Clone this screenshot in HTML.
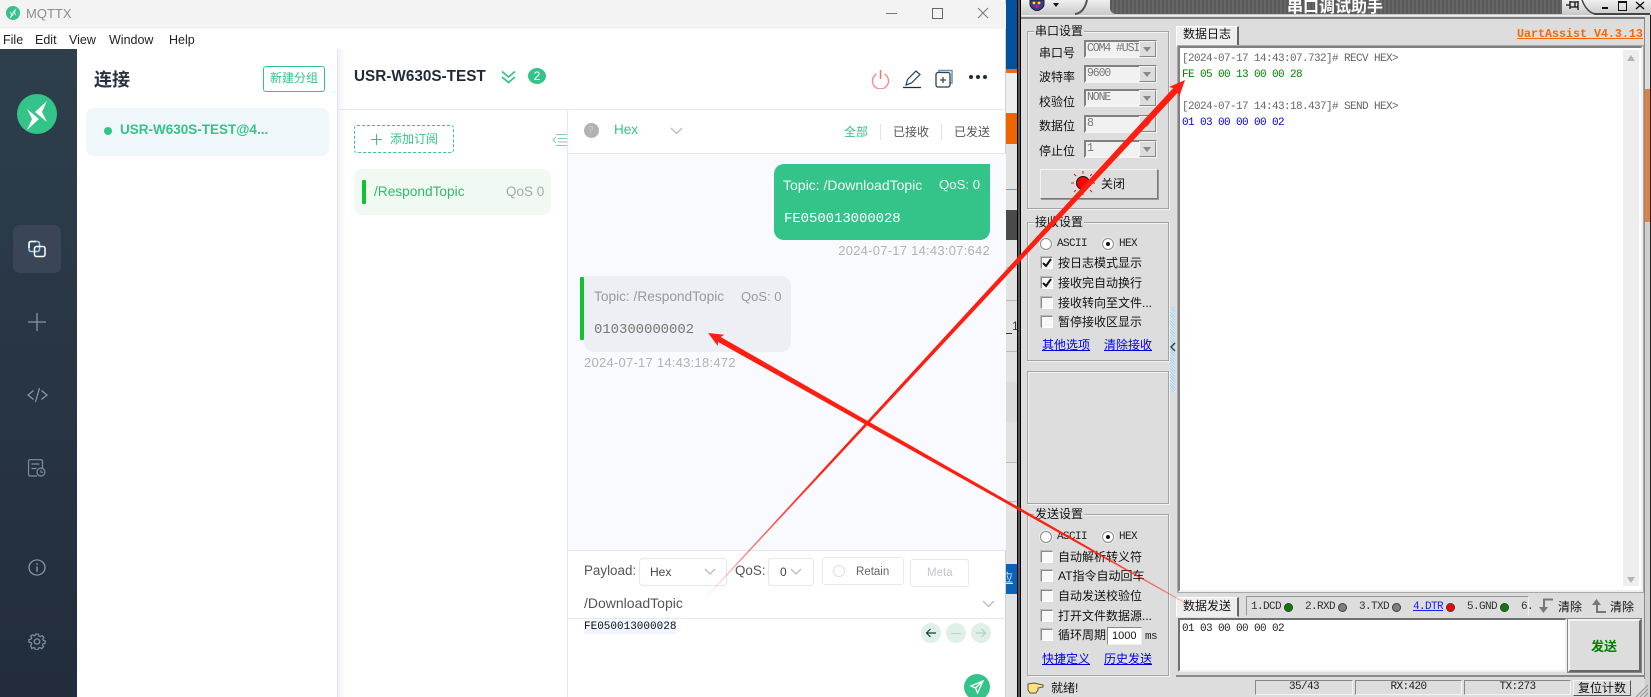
<!DOCTYPE html>
<html><head><meta charset="utf-8"><title>MQTTX</title>
<style>
html,body{margin:0;padding:0;width:1651px;height:697px;overflow:hidden;background:#ddd}
#p{position:relative;width:1651px;height:697px;overflow:hidden;font-family:"Liberation Sans","Noto Sans CJK SC",sans-serif}
#p div,#p svg{position:absolute}
.t{white-space:nowrap;line-height:20px;height:20px}
.g{color:#34c388}
.u{font-family:"Liberation Sans","WenQuanYi Zen Hei",sans-serif;font-size:12px;color:#111}
.m{font-family:"Liberation Mono","WenQuanYi Zen Hei",monospace}
.l{font-size:11px;letter-spacing:-.6px}
.box{border:1px solid #a4a4a4;box-shadow:1px 1px 0 #f2f2f2,inset 1px 1px 0 #f2f2f2;box-sizing:border-box}
.lab{background:#ddd;padding:0 1px;height:14px;line-height:14px;font-size:12px;color:#111;font-family:"WenQuanYi Zen Hei",sans-serif}
.cmb{left:1084px;width:73px;height:18px;box-sizing:border-box;background:#f1f1f1;border:2px solid;border-color:#808080 #f4f4f4 #f4f4f4 #808080;font:11.500px/14px "Liberation Mono",monospace;letter-spacing:-1.100px;color:#777;padding-left:1px;white-space:nowrap;overflow:hidden}
.dr{left:1139px;width:17px;height:16px;background:#ddd;border:1px solid;box-sizing:border-box;border-color:#f4f4f4 #888 #888 #f4f4f4}
.dr:after{content:"";position:absolute;left:3px;top:5px;border:4px solid transparent;border-top:5px solid #888}
.cb{left:1041px;width:12px;height:12px;box-sizing:border-box;background:#f8f8f8;border:1px solid;border-color:#8a8a8a #fff #fff #8a8a8a;box-shadow:-1px -1px 0 #bbb}
.rd{width:12px;height:12px;border-radius:50%;box-sizing:border-box;background:#fff;border:1px solid #888;box-shadow:0 0 0 1px #eee}
.lnk{color:#0000e6;text-decoration:underline;font-size:12px;font-family:"WenQuanYi Zen Hei",sans-serif}
.led{width:9px;height:9px;border-radius:50%;top:603px;box-shadow:0 0 0 1px #444 inset}
.sb{top:680px;height:15px;box-sizing:border-box;border:1px solid;border-color:#888 #f4f4f4 #f4f4f4 #888;text-align:center;font:11px/13px "Liberation Mono",monospace;letter-spacing:-.6px;color:#222}
</style></head><body><div id="p">

<!-- strip behind -->
<div style="left:1006px;top:0;width:11px;height:697px;background:#e2e2e2;overflow:hidden">
<div style="left:0;top:0;width:11px;height:69px;background:#03509e"></div>
<div style="left:0;top:69px;width:11px;height:4px;background:#ec6c10"></div>
<div style="left:0;top:73px;width:11px;height:40px;background:#eee"></div>
<div style="left:0;top:113px;width:11px;height:31px;background:#f06400"></div>
<div style="left:0;top:189px;width:11px;height:1px;background:#ee7a30"></div>
<div style="left:0;top:210px;width:11px;height:30px;background:#4a4a4a"></div>
<div style="left:0;top:267px;width:11px;height:1px;background:#bbb"></div>
<div style="left:0;top:300px;width:11px;height:1px;background:#bbb"></div>
<div style="left:0;top:333px;width:6px;height:1px;background:#333"></div>
<div class="t" style="left:6px;top:316px;font-size:12px;color:#333">1</div>
<div style="left:0;top:351px;width:11px;height:1px;background:#bbb"></div>
<div style="left:0;top:382px;width:11px;height:40px;background:#dadada"></div>
<div style="left:0;top:462px;width:11px;height:38px;background:#e8e8e8;border-bottom:1px solid #bbb;border-top:1px solid #bbb"></div>
<div style="left:0;top:564px;width:11px;height:30px;background:#0a63b8"></div>
<div class="t" style="left:-5px;top:568px;font-size:12px;color:#cfe4ff;text-decoration:underline">应</div>
</div>
<div style="left:1017px;top:0;width:4px;height:697px;background:#000;border-left:0"></div>
<div style="left:1018px;top:0;width:2px;height:697px;background:#555"></div>

<!-- MQTTX window -->
<div style="left:0;top:0;width:1006px;height:697px;background:#fff;border-right:1px solid #cfcfcf;box-sizing:border-box"></div>
<div style="left:0;top:0;width:1006px;height:29px;background:#f3f3f3;border-top-right-radius:6px"></div>
<svg style="left:6px;top:6px" width="14" height="14" viewBox="0 0 40 40"><circle cx="20" cy="20" r="20" fill="#34c388"/><path d="M30 7 18 18l12 10-5-10zM10 15l12 10-12 11 5-11z" fill="#fff"/></svg>
<div class="t" style="left:26px;top:4px;font-size:13px;color:#8c8c8c">MQTTX</div>
<div style="left:886px;top:13px;width:11px;height:1px;background:#777"></div>
<div style="left:932px;top:8px;width:9px;height:9px;border:1px solid #666"></div>
<svg style="left:977px;top:7px" width="12" height="12" viewBox="0 0 12 12"><path d="M1 1 11 11M11 1 1 11" stroke="#777" fill="none"/></svg>
<div class="t" style="left:3px;top:30px;font-size:12.500px;color:#222">File</div>
<div class="t" style="left:35px;top:30px;font-size:12.500px;color:#222">Edit</div>
<div class="t" style="left:69px;top:30px;font-size:12.500px;color:#222">View</div>
<div class="t" style="left:109px;top:30px;font-size:12.500px;color:#222">Window</div>
<div class="t" style="left:169px;top:30px;font-size:12.500px;color:#222">Help</div>

<!-- sidebar -->
<div style="left:0;top:49px;width:77px;height:648px;background:linear-gradient(180deg,#2e3f4c,#222c3c)"></div>
<svg style="left:17px;top:94px" width="40" height="40" viewBox="0 0 40 40"><circle cx="20" cy="20" r="20" fill="#34c388"/><path d="M30 7 18 18l12 10-5-10zM10 15l12 10-12 11 5-11z" fill="#fff"/></svg>
<div style="left:13px;top:225px;width:48px;height:48px;border-radius:7px;background:#3a4657"></div>
<svg style="left:27px;top:240px" width="20" height="18" viewBox="0 0 20 18"><rect x="2" y="1.500" width="10.500" height="10" rx="2" fill="none" stroke="#8fd6ff" stroke-width="1.500"/><rect x="7.500" y="6.500" width="10.500" height="10" rx="2" fill="none" stroke="#fff" stroke-width="1.500"/><path d="M2 8V3.500a2 2 0 0 1 2-2H9" fill="none" stroke="#fff" stroke-width="1.500"/></svg>
<svg style="left:28px;top:313px" width="18" height="18" viewBox="0 0 18 18"><path d="M9 0V18M0 9H18" stroke="#8b96a0" stroke-width="1.300"/></svg>
<svg style="left:27px;top:387px" width="21" height="16" viewBox="0 0 21 16"><path d="M6.500 3.500 1 8l5.500 4.500M14.500 3.500 20 8l-5.500 4.500M12.500 1 8.500 15" stroke="#8b9aa6" stroke-width="1.200" fill="none"/></svg>
<svg style="left:28px;top:459px" width="18" height="18" viewBox="0 0 18 18"><path d="M9 17H2a1.500 1.500 0 0 1-1.500-1.500V2A1.500 1.500 0 0 1 2 .7h11A1.500 1.500 0 0 1 14.500 2v7" stroke="#7f909e" stroke-width="1.200" fill="none"/><path d="M3.500 5h8M3.500 9.500h5" stroke="#7f909e" stroke-width="1.200"/><circle cx="13" cy="13" r="4" fill="none" stroke="#7f909e" stroke-width="1.200"/><path d="M13 10.800v2.400h2.200" stroke="#7f909e" fill="none"/></svg>
<svg style="left:28px;top:559px" width="18" height="17" viewBox="0 0 18 18" preserveAspectRatio="none"><circle cx="9" cy="9" r="8" stroke="#8a99a5" stroke-width="1.300" fill="none"/><path d="M9 8v5.500M9 4.500v1.700" stroke="#8a99a5" stroke-width="1.400"/></svg>
<svg style="left:28px;top:633px" width="18" height="17" viewBox="0 0 18 18" preserveAspectRatio="none"><path d="M7.500 1h3l.5 2.300 1.600.7 2-1.200 2 2.100-1.200 2 .6 1.500 2 .6v3l-2.300.5-.6 1.500 1.200 2-2.100 2.100-2-1.200-1.500.6-.5 2.300h-3l-.5-2.300-1.500-.6-2 1.200L1.900 14.500l1.200-2-.7-1.500L0 10.500v-3l2.400-.5.700-1.500-1.200-2L4 1.900l2 1.200 1-.6z" transform="translate(.9 .2) scale(.9)" fill="none" stroke="#7f909e" stroke-width="1.400"/><circle cx="9" cy="9" r="2.800" fill="none" stroke="#7f909e" stroke-width="1.300"/></svg>

<!-- connection list -->
<div class="t" style="left:94px;top:69px;font-size:18px;font-weight:700;color:#2a3440;font-family:'Noto Sans CJK SC',sans-serif">连接</div>
<div style="left:263px;top:66px;width:62px;height:26px;box-sizing:border-box;border:1px solid #34c388;border-radius:3px"></div>
<div class="t g" style="left:270px;top:68px;font-size:12px">新建分组</div>
<div style="left:86px;top:108px;width:243px;height:48px;background:#eff7fb;border-radius:8px"></div>
<div style="left:104px;top:127px;width:8px;height:8px;border-radius:50%;background:#34c388"></div>
<div class="t g" style="left:120px;top:120px;font-size:13.500px;font-weight:700">USR-W630S-TEST@4...</div>
<div style="left:337px;top:49px;width:1px;height:648px;background:#e3e3ea"></div>
<div style="left:338px;top:49px;width:8px;height:648px;background:linear-gradient(90deg,#f1f2f8,#fff)"></div>

<!-- header -->
<div class="t" style="left:354px;top:67px;font-size:15.300px;font-weight:700;color:#1f2a3a">USR-W630S-TEST</div>
<svg style="left:501px;top:70px" width="15" height="14" viewBox="0 0 15 14"><path d="M1 1.500 7.500 7 14 1.500M1 7 7.500 12.500 14 7" stroke="#34c388" stroke-width="1.800" fill="none"/></svg>
<div style="left:528px;top:68px;width:18px;height:16px;border-radius:50%;background:#34c388;color:#fff;font-size:12px;line-height:17px;text-align:center">2</div>
<svg style="left:871px;top:69px" width="19" height="20" viewBox="0 0 19 20"><path d="M5.500 5a8 8 0 1 0 8 0" fill="none" stroke="#f88" stroke-width="1.400"/><path d="M9.500 1v9" stroke="#f66" stroke-width="1.400"/></svg>
<svg style="left:902px;top:69px" width="20" height="20" viewBox="0 0 20 20"><path d="M4 16l1.500-5.500L14 2l4 3.500L9.500 14z" fill="none" stroke="#23405f" stroke-width="1.200"/><path d="M1 18.500H19" stroke="#1f2a3a" stroke-width="1.200"/></svg>
<svg style="left:935px;top:69px" width="19" height="19" viewBox="0 0 19 19"><path d="M4 3V1.500h13V14h-1.500" fill="none" stroke="#7b8b9c" stroke-width="1.500"/><rect x="1" y="3.500" width="14" height="14.500" rx="2" fill="#fff" stroke="#23405f" stroke-width="1.300"/><path d="M8 8v6M5 11h6" stroke="#444" stroke-width="1.300"/></svg>
<div style="left:969px;top:75px;width:4px;height:4px;background:#1f2a3a;border-radius:50%"></div>
<div style="left:976px;top:75px;width:4px;height:4px;background:#1f2a3a;border-radius:50%"></div>
<div style="left:983px;top:75px;width:4px;height:4px;background:#1f2a3a;border-radius:50%"></div>
<div style="left:338px;top:109px;width:668px;height:1px;background:#e6e6f0"></div>

<!-- subs -->
<div style="left:354px;top:125px;width:100px;height:28px;box-sizing:border-box;border:1px dashed #34c388;border-radius:3px"></div>
<svg style="left:371px;top:134px" width="11" height="11" viewBox="0 0 11 11"><path d="M5.500 0V11M0 5.500H11" stroke="#34c388"/></svg>
<div class="t g" style="left:390px;top:129px;font-size:12px">添加订阅</div>
<svg style="left:552px;top:133px" width="15" height="14" viewBox="0 0 15 14"><path d="M4 1.500H15M6 5.500H15M6 9H15M4 12.500H15M4 4 1 7l3 3" stroke="#7ed0ab" fill="none"/></svg>
<div style="left:354px;top:169px;width:197px;height:46px;background:#f0faf3;border-radius:8px"></div>
<div style="left:362px;top:180px;width:4px;height:24px;background:#10c22e;border-radius:1px"></div>
<div class="t" style="left:374px;top:182px;font-size:13.700px;color:#34b86a">/RespondTopic</div>
<div class="t" style="left:506px;top:182px;font-size:13.500px;color:#a8a8a8">QoS 0</div>

<!-- message pane -->
<div style="left:567px;top:109px;width:1px;height:588px;background:#e6e6f0"></div>
<div style="left:568px;top:153px;width:438px;height:398px;background:#f9faff;border-top:1px solid #e6e6f0;border-bottom:1px solid #e6e6f0;box-sizing:border-box"></div>
<div style="left:583.500px;top:123px;width:15px;height:15px;border-radius:50%;background:#b2b2b2"></div>
<div class="t" style="left:588px;top:121px;font-size:10px;color:#ccc">?</div>
<div class="t g" style="left:614px;top:120px;font-size:13.500px">Hex</div>
<svg style="left:670px;top:127px" width="13" height="8" viewBox="0 0 13 8"><path d="M1 1l5.500 5.500L12 1" fill="none" stroke="#b5bcc4" stroke-width="1.300"/></svg>
<div class="t g" style="left:844px;top:122px;font-size:12px">全部</div>
<div style="left:880px;top:124px;width:1px;height:16px;background:#e3e3e8"></div>
<div class="t" style="left:893px;top:122px;font-size:12px;color:#555">已接收</div>
<div style="left:941px;top:124px;width:1px;height:16px;background:#e3e3e8"></div>
<div class="t" style="left:954px;top:122px;font-size:12px;color:#555">已发送</div>

<div style="left:774px;top:164px;width:216px;height:76px;background:#34c388;border-radius:10px 0 10px 10px"></div>
<div class="t" style="left:783px;top:175px;font-size:14px;color:#eefaf4">Topic: /DownloadTopic</div>
<div class="t" style="left:939px;top:175px;font-size:13.200px;color:#eefaf4">QoS: 0</div>
<div class="t m" style="left:784px;top:209px;font-size:14px;color:#fff;letter-spacing:-.07px">FE050013000028</div>
<div class="t" style="right:661px;top:241px;font-size:13px;color:#b3b3b3;letter-spacing:.25px">2024-07-17 14:43:07:642</div>

<div style="left:584px;top:276px;width:207px;height:76px;background:#eeeff4;border-radius:0 10px 10px 10px"></div>
<div style="left:580px;top:277px;width:4px;height:63px;background:#10c22e;border-radius:1px"></div>
<div class="t" style="left:594px;top:287px;font-size:13.700px;color:#9a9a9a">Topic: /RespondTopic</div>
<div class="t" style="left:741px;top:287px;font-size:13px;color:#9a9a9a">QoS: 0</div>
<div class="t m" style="left:594px;top:320px;font-size:14px;color:#777;letter-spacing:-.07px">010300000002</div>
<div class="t" style="left:584px;top:353px;font-size:13px;color:#b3b3b3;letter-spacing:.25px">2024-07-17 14:43:18:472</div>

<!-- publish -->
<div class="t" style="left:584px;top:561px;font-size:13.400px;color:#555">Payload:</div>
<div style="left:639px;top:558px;width:88px;height:28px;box-sizing:border-box;border:1px solid #e5e6ee;border-radius:4px"></div>
<div class="t" style="left:650px;top:562px;font-size:12px;color:#444">Hex</div>
<svg style="left:704px;top:568px" width="12" height="8" viewBox="0 0 12 8"><path d="M1 1l5 5 5-5" fill="none" stroke="#b5bcc4" stroke-width="1.300"/></svg>
<div class="t" style="left:735px;top:561px;font-size:13.400px;color:#555">QoS:</div>
<div style="left:768px;top:558px;width:46px;height:28px;box-sizing:border-box;border:1px solid #e5e6ee;border-radius:4px"></div>
<div class="t" style="left:780px;top:562px;font-size:12px;color:#444">0</div>
<svg style="left:790px;top:568px" width="12" height="8" viewBox="0 0 12 8"><path d="M1 1l5 5 5-5" fill="none" stroke="#b5bcc4" stroke-width="1.300"/></svg>
<div style="left:822px;top:557px;width:82px;height:28px;box-sizing:border-box;border:1px solid #e8e9f0;border-radius:3px"></div>
<div style="left:833px;top:565px;width:12px;height:12px;box-sizing:border-box;border:1px solid #dcdfe6;border-radius:50%"></div>
<div class="t" style="left:856px;top:562px;font-size:11.500px;color:#666">Retain</div>
<div style="left:910px;top:559px;width:59px;height:28px;box-sizing:border-box;border:1px solid #e8e9f0;border-radius:3px"></div>
<div class="t" style="left:927px;top:563px;font-size:11.500px;color:#c2c6cf">Meta</div>
<div class="t" style="left:584px;top:593px;font-size:14px;color:#555">/DownloadTopic</div>
<svg style="left:982px;top:600px" width="13" height="8" viewBox="0 0 13 8"><path d="M1 1l5.500 5.500L12 1" fill="none" stroke="#b5bcc4" stroke-width="1.300"/></svg>
<div style="left:568px;top:618px;width:438px;height:1px;background:#e6e6f0"></div>
<div style="left:584px;top:620px;width:92px;height:14px;background:#f0f5ff"></div>
<div class="t m" style="left:584px;top:617px;font-size:11px;color:#111">FE050013000028</div>
<div style="left:921px;top:623px;width:20px;height:20px;border-radius:50%;background:#dff0e8"></div>
<div style="left:946px;top:623px;width:20px;height:20px;border-radius:50%;background:#dff0e8"></div>
<div style="left:971px;top:623px;width:20px;height:20px;border-radius:50%;background:#dff0e8"></div>
<svg style="left:925px;top:627px" width="12" height="12" viewBox="0 0 12 12"><path d="M11 6H1.500M5.500 2 1.500 6l4 4" fill="none" stroke="#1f3a4a" stroke-width="1.200"/></svg>
<div style="left:951px;top:633px;width:10px;height:1px;background:#bcd8cc"></div>
<svg style="left:975px;top:627px" width="12" height="12" viewBox="0 0 12 12"><path d="M1 6h9.500M6.500 2l4 4-4 4" fill="none" stroke="#b4cfc3" stroke-width="1.200"/></svg>
<div style="left:964px;top:674px;width:26px;height:26px;border-radius:50%;background:#34c388"></div>
<svg style="left:970px;top:680px" width="14" height="14" viewBox="0 0 14 14"><path d="M13 1 1 6l4.500 2L7.500 13zM13 1 5.500 8" fill="none" stroke="#fff" stroke-width="1.300"/></svg>

<!-- Uart window -->
<div style="left:1021px;top:0;width:630px;height:697px;background:#ddd"></div>
<div style="left:1650px;top:0;width:1px;height:697px;background:#222"></div>
<div style="left:1645px;top:89px;width:5px;height:133px;background:#e07f40"></div>
<div style="left:1645px;top:222px;width:5px;height:475px;background:#cfcfcf"></div>
<div style="left:1644px;top:19px;width:1px;height:660px;background:#8a8a8a"></div>
<!-- title bar -->
<div style="left:1021px;top:0;width:630px;height:15px;background:linear-gradient(180deg,#f0f0f0,#c8c8c8)"></div>
<div style="left:1110px;top:0;width:452px;height:14px;background:repeating-linear-gradient(90deg,#5a5a5a 0 2px,#666 2px 4px);border-radius:0 0 0 6px"></div>
<svg style="left:1075px;top:0" width="14" height="16" viewBox="0 0 14 16"><path d="M12 0Q9 13 0 14" fill="none" stroke="#555" stroke-width="2"/></svg>
<svg style="left:1580px;top:0" width="16" height="16" viewBox="0 0 16 16"><path d="M2 0Q7 13 16 14" fill="none" stroke="#444" stroke-width="1.500"/></svg>
<div style="left:1594px;top:13px;width:56px;height:2px;background:#444"></div>
<div class="t" style="left:1287px;top:-5px;font-size:16px;font-weight:700;color:#fff;letter-spacing:0;font-family:'Noto Sans CJK SC',sans-serif">串口调试助手</div>
<svg style="left:1029px;top:0" width="16" height="11" viewBox="0 0 16 11"><path d="M1 0H15V5Q14 9 8 11 2 9 1 5z" fill="#3a3a9a" stroke="#222"/><circle cx="5" cy="3" r="1.400" fill="#ffe000"/><circle cx="10" cy="3" r="1.400" fill="#ffe000"/><circle cx="8" cy="6.500" r="1.500" fill="#e22"/></svg>
<div style="left:1053px;top:3px;width:0;height:0;border:3.500px solid transparent;border-top:4px solid #111"></div>
<svg style="left:1566px;top:0" width="13" height="11" viewBox="0 0 13 11"><path d="M0 5H4M4 1V9M4 2H12V7H4M9 2V7M12 1V10" stroke="#111" fill="none" stroke-width="1.300"/></svg>
<div style="left:1602px;top:7px;width:6px;height:2px;background:#111"></div>
<div style="left:1618px;top:1px;width:7px;height:7px;border:1.500px solid #111;border-top-width:2px"></div>
<svg style="left:1635px;top:1px" width="10" height="9" viewBox="0 0 10 9"><path d="M1 1l8 7M9 1 1 8" stroke="#111" stroke-width="1.400"/></svg>
<div style="left:1021px;top:15px;width:624px;height:1px;background:#eee"></div>
<div style="left:1021px;top:17px;width:624px;height:2px;background:#7e7e7e"></div>

<!-- serial settings -->
<div class="box" style="left:1027px;top:31px;width:142px;height:178px"></div>
<div class="lab" style="left:1034px;top:24px">串口设置</div>
<div class="t u" style="left:1039px;top:43px">串口号</div>
<div class="t u" style="left:1039px;top:67px">波特率</div>
<div class="t u" style="left:1039px;top:92px">校验位</div>
<div class="t u" style="left:1039px;top:116px">数据位</div>
<div class="t u" style="left:1039px;top:141px">停止位</div>
<div class="cmb" style="top:40px">COM4 #USI</div><div class="dr" style="top:41px"></div>
<div class="cmb" style="top:65px">9600</div><div class="dr" style="top:66px"></div>
<div class="cmb" style="top:89px">NONE</div><div class="dr" style="top:90px"></div>
<div class="cmb" style="top:115px">8</div><div class="dr" style="top:116px"></div>
<div class="cmb" style="top:140px">1</div><div class="dr" style="top:141px"></div>
<div style="left:1040px;top:169px;width:118px;height:30px;box-sizing:border-box;background:#ddd;border:1px solid;border-color:#f4f4f4 #777 #777 #f4f4f4;box-shadow:1px 1px 0 #999"></div>
<svg style="left:1071px;top:171px" width="24" height="24" viewBox="0 0 24 24"><g stroke="#f11" stroke-width="1"><path d="M12 0v3M12 21v3M0 12h3M21 12h3M3 3l2 2M19 19l2 2M21 3l-2 2M3 21l2-2"/></g><circle cx="12" cy="12" r="6.500" fill="#f00" stroke="#111"/></svg>
<div class="t u" style="left:1101px;top:174px">关闭</div>

<!-- rx settings -->
<div class="box" style="left:1027px;top:222px;width:142px;height:139px"></div>
<div class="lab" style="left:1034px;top:215px">接收设置</div>
<div class="rd" style="left:1040px;top:238px"></div>
<div class="t m l" style="left:1057px;top:234px;color:#222">ASCII</div>
<div class="rd" style="left:1102px;top:238px"></div><div style="left:1106px;top:242px;width:4px;height:4px;border-radius:50%;background:#111"></div>
<div class="t m l" style="left:1119px;top:234px;color:#222">HEX</div>
<div class="cb" style="top:257px"></div><svg style="left:1042px;top:258px" width="10" height="10" viewBox="0 0 10 10"><path d="M1 5l3 3 5-7" fill="none" stroke="#111" stroke-width="2"/></svg>
<div class="cb" style="top:277px"></div><svg style="left:1042px;top:278px" width="10" height="10" viewBox="0 0 10 10"><path d="M1 5l3 3 5-7" fill="none" stroke="#111" stroke-width="2"/></svg>
<div class="cb" style="top:297px"></div>
<div class="cb" style="top:316px"></div>
<div class="t u" style="left:1058px;top:253px">按日志模式显示</div>
<div class="t u" style="left:1058px;top:273px">接收完自动换行</div>
<div class="t u" style="left:1058px;top:293px">接收转向至文件...</div>
<div class="t u" style="left:1058px;top:312px">暂停接收区显示</div>
<div class="t lnk" style="left:1042px;top:335px">其他选项</div>
<div class="t lnk" style="left:1104px;top:335px">清除接收</div>

<!-- splitter -->
<div style="left:1170px;top:307px;width:5px;height:85px;background:repeating-linear-gradient(45deg,#a9cfe6 0 1px,#dcecf5 1px 2px)"></div>
<svg style="left:1170px;top:342px" width="6" height="10" viewBox="0 0 6 10"><path d="M5 1 1 5l4 4" fill="none" stroke="#245" stroke-width="1.500"/></svg>

<div class="box" style="left:1027px;top:371px;width:142px;height:133px"></div>

<!-- tx settings -->
<div class="box" style="left:1027px;top:514px;width:142px;height:162px"></div>
<div class="lab" style="left:1034px;top:507px">发送设置</div>
<div class="rd" style="left:1040px;top:531px"></div>
<div class="t m l" style="left:1057px;top:527px;color:#222">ASCII</div>
<div class="rd" style="left:1102px;top:531px"></div><div style="left:1106px;top:535px;width:4px;height:4px;border-radius:50%;background:#111"></div>
<div class="t m l" style="left:1119px;top:527px;color:#222">HEX</div>
<div class="cb" style="top:551px"></div><div class="cb" style="top:570px"></div><div class="cb" style="top:590px"></div><div class="cb" style="top:610px"></div><div class="cb" style="top:629px"></div>
<div class="t u" style="left:1058px;top:547px">自动解析转义符</div>
<div class="t u" style="left:1058px;top:566px">AT指令自动回车</div>
<div class="t u" style="left:1058px;top:586px">自动发送校验位</div>
<div class="t u" style="left:1058px;top:606px">打开文件数据源...</div>
<div class="t u" style="left:1058px;top:625px">循环周期</div>
<div style="left:1107px;top:627px;width:35px;height:18px;box-sizing:border-box;background:#fff;border:1px solid;border-color:#888 #eee #eee #888;font:11px/16px 'Liberation Sans',sans-serif;padding-left:4px;color:#111">1000</div>
<div class="t m l" style="left:1145px;top:627px;color:#222">ms</div>
<div class="t lnk" style="left:1042px;top:649px">快捷定义</div>
<div class="t lnk" style="left:1104px;top:649px">历史发送</div>

<!-- status left -->
<svg style="left:1027px;top:681px" width="17" height="14" viewBox="0 0 17 14"><path d="M1 3 7 2l9 2v2l-5 1v2L9 12H3L1 9z" fill="#ffe27a" stroke="#554" stroke-width="1"/></svg>
<div class="t u" style="left:1051px;top:678px">就绪!</div>

<!-- log tab -->
<div style="left:1176px;top:26px;width:63px;height:21px;box-sizing:border-box;background:#eee;border:1px solid;border-color:#fff #666 transparent #fff;border-right-width:2px"></div>
<div class="t u" style="left:1183px;top:24px">数据日志</div>
<div class="t m" style="left:1517px;top:24px;font-size:11.670px;font-weight:700;color:#ff6600;text-decoration:underline">UartAssist V4.3.13</div>
<!-- log box -->
<div style="left:1178px;top:46px;width:465px;height:546px;box-sizing:border-box;background:#fff;border:2px solid;border-color:#808080 #f0f0f0 #f0f0f0 #808080;box-shadow:0 0 0 1px #aaa"></div>
<div style="left:1623px;top:50px;width:16px;height:536px;background:#eee"></div>
<div style="left:1627px;top:55px;width:0;height:0;border:4px solid transparent;border-bottom:6px solid #b4b4b4;border-top:0"></div>
<div style="left:1627px;top:577px;width:0;height:0;border:4px solid transparent;border-top:6px solid #b4b4b4;border-bottom:0"></div>
<div class="t m l" style="left:1182px;top:49px;color:#666">[2024-07-17 14:43:07.732]# RECV HEX&gt;</div>
<div class="t m l" style="left:1182px;top:65px;color:#008000">FE 05 00 13 00 00 28</div>
<div class="t m l" style="left:1182px;top:97px;color:#666">[2024-07-17 14:43:18.437]# SEND HEX&gt;</div>
<div class="t m l" style="left:1182px;top:113px;color:#0000e6">01 03 00 00 00 02</div>

<!-- send tab row -->
<div style="left:1176px;top:597px;width:63px;height:20px;box-sizing:border-box;background:#eee;border:1px solid;border-color:#fff #666 transparent #fff;border-right-width:2px"></div>
<div class="t u" style="left:1183px;top:596px">数据发送</div>
<div style="left:1246px;top:596px;width:283px;height:20px;box-sizing:border-box;border:1px solid;border-color:#999 #f2f2f2 transparent #999"></div>
<div class="t m l" style="left:1251px;top:597px;color:#333">1.DCD</div><div class="led" style="left:1284px;background:#0a7a0a"></div>
<div class="t m l" style="left:1305px;top:597px;color:#333">2.RXD</div><div class="led" style="left:1338px;background:#808080"></div>
<div class="t m l" style="left:1359px;top:597px;color:#333">3.TXD</div><div class="led" style="left:1392px;background:#808080"></div>
<div class="t m l" style="left:1413px;top:597px;color:#1a1aff;text-decoration:underline">4.DTR</div><div class="led" style="left:1446px;background:#f00"></div>
<div class="t m l" style="left:1467px;top:597px;color:#333">5.GND</div><div class="led" style="left:1500px;background:#0a7a0a"></div>
<div class="t m l" style="left:1521px;top:597px;color:#333">6.</div>
<svg style="left:1538px;top:598px" width="16" height="16" viewBox="0 0 16 16"><path d="M15 1.500H6V11" fill="none" stroke="#777" stroke-width="2"/><path d="M1 9H10L5.500 15z" fill="#777"/></svg>
<div class="t u" style="left:1558px;top:597px">清除</div>
<svg style="left:1591px;top:598px" width="16" height="16" viewBox="0 0 16 16"><path d="M15 14H6V6" fill="none" stroke="#777" stroke-width="2"/><path d="M1 7H10L5.500 1z" fill="#777"/></svg>
<div class="t u" style="left:1610px;top:597px">清除</div>

<!-- send box -->
<div style="left:1178px;top:618px;width:389px;height:54px;box-sizing:border-box;background:#fff;border:2px solid;border-color:#707070 #f0f0f0 #f0f0f0 #707070"></div>
<div class="t m l" style="left:1182px;top:619px;color:#222">01 03 00 00 00 02</div>
<div style="left:1568px;top:619px;width:73px;height:53px;box-sizing:border-box;background:#ddd;border:2px solid;border-color:#f4f4f4 #666 #666 #f4f4f4;outline:1px solid #888"></div>
<div class="t" style="left:1591px;top:636px;font-size:13px;font-weight:700;color:#008000;font-family:'Noto Sans CJK SC',sans-serif">发送</div>
<div style="left:1021px;top:675px;width:624px;height:2px;background:#8a8a8a;clip-path:inset(0 0 0 155px)"></div>

<!-- status -->
<div class="sb" style="left:1255px;width:98px">35/43</div>
<div class="sb" style="left:1355px;width:107px">RX:420</div>
<div class="sb" style="left:1464px;width:107px">TX:273</div>
<div style="left:1573px;top:680px;width:58px;height:16px;box-sizing:border-box;background:#ddd;border:1px solid;border-color:#f4f4f4 #555 #555 #f4f4f4;text-align:center;font:12px/14px 'WenQuanYi Zen Hei',sans-serif;color:#111">复位计数</div>
<svg style="left:1635px;top:684px" width="13" height="13" viewBox="0 0 13 13"><path d="M13 1 1 13M13 5 5 13M13 9 9 13" stroke="#999" stroke-width="1.200"/></svg>

<!-- red arrows -->
<svg style="left:0;top:0" width="1651" height="697" viewBox="0 0 1651 697">
<defs>
<linearGradient id="a" gradientUnits="userSpaceOnUse" x1="0" y1="0" x2="569" y2="0"><stop offset="0" stop-color="#ff1e10"/><stop offset=".75" stop-color="#ff1e10"/><stop offset=".92" stop-color="#ff1e10" stop-opacity=".55"/><stop offset="1" stop-color="#ff1e10" stop-opacity="0"/></linearGradient>
<linearGradient id="b" gradientUnits="userSpaceOnUse" x1="0" y1="0" x2="709" y2="0"><stop offset="0" stop-color="#ff1e10"/><stop offset=".75" stop-color="#ff1e10"/><stop offset=".92" stop-color="#ff1e10" stop-opacity=".55"/><stop offset="1" stop-color="#ff1e10" stop-opacity="0"/></linearGradient>
</defs>
<g transform="translate(708 333) rotate(29.500)"><path d="M0 0 15-6.500 13-2.800 569-.4V.4L13 2.800 15 6.500z" fill="url(#a)"/></g>
<g transform="translate(1185 80) rotate(132.800)"><path d="M0 0 16-7 14-3.200 709-.4V.4L14 3.200 16 7z" fill="url(#b)"/></g>
</svg>
</div></body></html>
